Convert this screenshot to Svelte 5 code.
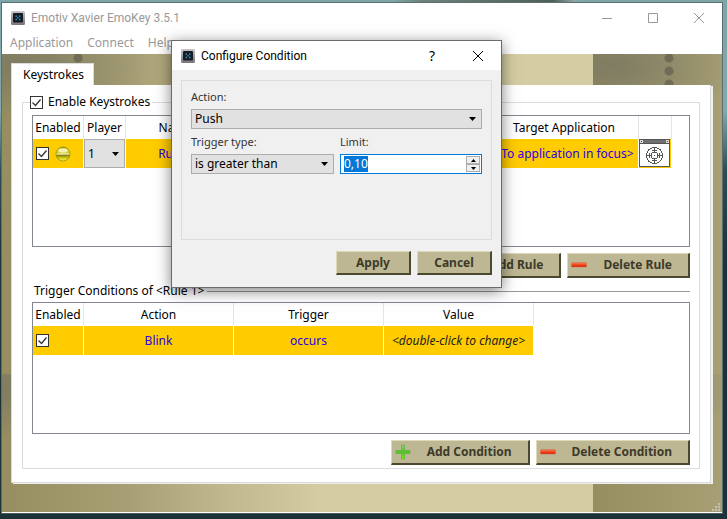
<script>
  import { onMount } from 'svelte';

  let enableKeystrokes = $state(true);
  let ruleEnabled = $state(true);
  let conditionEnabled = $state(true);
  let limit = $state('0,10');
  let limitInput;

  const menus = ['Application', 'Connect', 'Help'];

  onMount(() => {
    limitInput.focus();
    limitInput.select();
  });

  function step(delta) {
    const value = parseFloat(limit.replace(',', '.')) + delta;
    limit = Math.min(1, Math.max(0, value)).toFixed(2).replace('.', ',');
  }
</script>

{#snippet appIcon()}
  <svg class="app-icon" viewBox="0 0 14 14" aria-hidden="true">
    <defs>
      <linearGradient id="frame" x1="0" y1="0" x2="0" y2="1">
        <stop offset="0" stop-color="#c9c6cc" />
        <stop offset="1" stop-color="#77747a" />
      </linearGradient>
    </defs>
    <rect width="14" height="14" rx="1.5" fill="url(#frame)" />
    <rect x="2" y="2" width="10" height="9.500" rx="1" fill="#171b22" />
    <g fill="#2ca5dc">
      <rect x="4.500" y="4.500" width="1.400" height="1.400" />
      <rect x="8" y="4.500" width="1.400" height="1.400" />
      <rect x="6.200" y="6.100" width="1.400" height="1.400" />
      <rect x="4.500" y="7.800" width="1.400" height="1.400" />
      <rect x="8" y="7.800" width="1.400" height="1.400" />
    </g>
  </svg>
{/snippet}

{#snippet plus()}
  <svg class="btn-icon" viewBox="0 0 16 16" aria-hidden="true">
    <defs>
      <linearGradient id="green" x1="0" y1="0" x2="0" y2="1">
        <stop offset="0" stop-color="#8fd070" />
        <stop offset=".5" stop-color="#4fc32c" />
        <stop offset="1" stop-color="#7be60a" />
      </linearGradient>
    </defs>
    <path d="M6.500 1h3v5.500h5.500v3H9.500v5.500h-3V9.500H1V6.500h5.500z" fill="url(#green)" stroke="#5cab3c" stroke-width=".6" />
  </svg>
{/snippet}

{#snippet minus()}
  <svg class="btn-icon" viewBox="0 0 16 16" aria-hidden="true">
    <defs>
      <linearGradient id="red" x1="0" y1="0" x2="0" y2="1">
        <stop offset="0" stop-color="#f08560" />
        <stop offset=".5" stop-color="#ee4a1c" />
        <stop offset="1" stop-color="#d81a05" />
      </linearGradient>
    </defs>
    <rect x=".5" y="5.500" width="15" height="4.500" rx=".6" fill="url(#red)" stroke="#d9694b" stroke-width=".5" />
  </svg>
{/snippet}

<div class="desktop">
  <main class="window">
    <header class="titlebar">
      {@render appIcon()}
      <h1>Emotiv Xavier EmoKey 3.5.1</h1>
      <div class="controls">
        <button aria-label="Minimize"><svg viewBox="0 0 10 10"><path d="M0 5.500h10" /></svg></button>
        <button aria-label="Maximize"><svg viewBox="0 0 10 10"><path d="M.5.5h9v9h-9z" /></svg></button>
        <button aria-label="Close"><svg viewBox="0 0 10 10"><path d="M0 0l10 10M10 0L0 10" /></svg></button>
      </div>
    </header>
    <nav class="menubar">
      {#each menus as menu}
        <button>{menu}</button>
      {/each}
    </nav>

    <div class="body">
      <div class="tabs" role="tablist">
        <button class="tab" role="tab" aria-selected="true">Keystrokes</button>
      </div>
      <div class="pane" role="tabpanel">
        <fieldset class="group">
          <legend>
            <label><input class="check" type="checkbox" bind:checked={enableKeystrokes} />Enable Keystrokes</label>
          </legend>

          <div class="list">
            <table>
              <colgroup>
                <col class="c-enabled" /><col class="c-player" /><col class="c-name" /><col class="c-key" />
                <col class="c-target" /><col class="c-pick" />
              </colgroup>
              <thead>
                <tr><th>Enabled</th><th>Player</th><th>Name</th><th></th><th>Target Application</th><th></th></tr>
              </thead>
              <tbody>
                <tr>
                  <td class="flags">
                    <div>
                      <input class="check" type="checkbox" aria-label="Rule enabled" bind:checked={ruleEnabled} />
                      <svg class="led" viewBox="0 0 16 16" aria-hidden="true">
                        <defs>
                          <linearGradient id="ledBall" x1="0" y1="0" x2="0" y2="1">
                            <stop offset="0" stop-color="#8f8a10" />
                            <stop offset=".2" stop-color="#e6e05a" />
                            <stop offset=".46" stop-color="#c9c02c" />
                            <stop offset=".56" stop-color="#7d7600" />
                            <stop offset=".8" stop-color="#d8d020" />
                            <stop offset="1" stop-color="#f8f45a" />
                          </linearGradient>
                        </defs>
                        <circle cx="8" cy="8" r="7" fill="url(#ledBall)" stroke="#968a14" stroke-width=".8" />
                        <ellipse cx="8" cy="4.500" rx="4.500" ry="2.200" fill="#fffcd0" opacity=".7" />
                        <path d="M1.500 8h13" stroke="#fbf7c0" stroke-width="1.200" />
                      </svg>
                    </div>
                  </td>
                  <td class="player">
                    <div class="combo">
                      <select aria-label="Player"><option>1</option><option>2</option></select>
                      <svg viewBox="0 0 7 4" aria-hidden="true"><path d="M0 0h7L3.500 4z" /></svg>
                    </div>
                  </td>
                  <td>Rule 1</td>
                  <td></td>
                  <td>&lt;To application in focus&gt;</td>
                  <td class="pick">
                    <button aria-label="Pick target application">
                      <svg viewBox="0 0 31 28" shape-rendering="crispEdges" aria-hidden="true">
                        <rect width="31" height="28" fill="#555" />
                        <rect x="1" y="5" width="29" height="22" fill="#fff" />
                        <rect x="1" y="1" width="29" height="3" fill="#707070" />
                        <rect x="1" y="1" width="3" height="3" fill="#ddd" />
                        <rect x="27" y="1" width="3" height="3" fill="#ddd" />
                        <rect x="2" y="2" width="1" height="1" fill="#444" />
                        <rect x="28" y="2" width="1" height="1" fill="#444" />
                        <g fill="none" stroke="#555">
                          <circle cx="15.500" cy="16.500" r="8" />
                          <path d="M15.500 8v6M15.500 19v6M7 16.500h6M18 16.500h6" />
                          <path d="M13 11.500h5M13 13.500h5M13 19.500h5M13 21.500h5M10.500 14v5M12.500 14v5M18.500 14v5M20.500 14v5" />
                        </g>
                        <rect x="15" y="16" width="1" height="1" fill="#555" />
                      </svg>
                    </button>
                  </td>
                </tr>
              </tbody>
            </table>
          </div>
          <div class="actions">
            <button class="btn">{@render plus()}<span>Add Rule</span></button>
            <button class="btn">{@render minus()}<span>Delete Rule</span></button>
          </div>

          <h2>Trigger Conditions of &lt;Rule 1&gt;</h2>
          <div class="list">
            <table>
              <colgroup>
                <col class="c-enabled" /><col class="c-wide" /><col class="c-wide" /><col class="c-wide" />
              </colgroup>
              <thead>
                <tr><th>Enabled</th><th>Action</th><th>Trigger</th><th>Value</th></tr>
              </thead>
              <tbody>
                <tr>
                  <td class="flags">
                    <div>
                      <input class="check" type="checkbox" aria-label="Condition enabled" bind:checked={conditionEnabled} />
                    </div>
                  </td>
                  <td>Blink</td>
                  <td>occurs</td>
                  <td class="hint">&lt;double-click to change&gt;</td>
                </tr>
              </tbody>
            </table>
          </div>
          <div class="actions">
            <button class="btn">{@render plus()}<span>Add Condition</span></button>
            <button class="btn">{@render minus()}<span>Delete Condition</span></button>
          </div>
        </fieldset>
      </div>
      <svg class="grip" viewBox="0 0 8 8" aria-hidden="true">
        <path d="M6 0h2v2H6zM3 3h2v2H3zM6 3h2v2H6zM0 6h2v2H0zM3 6h2v2H3zM6 6h2v2H6z" fill="#c3c0b4" />
      </svg>
    </div>
  </main>

  <div class="dialog" role="dialog" aria-labelledby="dialog-title">
    <header class="titlebar">
      {@render appIcon()}
      <h1 id="dialog-title">Configure Condition</h1>
      <div class="controls">
        <button aria-label="Help" class="help">?</button>
        <button aria-label="Close"><svg viewBox="0 0 10 10"><path d="M0 0l10 10M10 0L0 10" /></svg></button>
      </div>
    </header>
    <div class="form">
      <div class="fields">
        <div class="field full">
          <label for="action">Action:</label>
          <div class="combo">
            <select id="action"><option>Push</option><option>Pull</option><option>Lift</option></select>
            <svg viewBox="0 0 7 4" aria-hidden="true"><path d="M0 0h7L3.500 4z" /></svg>
          </div>
        </div>
        <div class="field">
          <label for="trigger">Trigger type:</label>
          <div class="combo">
            <select id="trigger"><option>is greater than</option><option>is less than</option></select>
            <svg viewBox="0 0 7 4" aria-hidden="true"><path d="M0 0h7L3.500 4z" /></svg>
          </div>
        </div>
        <div class="field">
          <label for="limit">Limit:</label>
          <div class="spin">
            <input id="limit" type="text" bind:value={limit} bind:this={limitInput} />
            <div class="steps">
              <button aria-label="Increase" onclick={() => step(0.1)}><svg viewBox="0 0 5 3"><path d="M0 3h5L2.500 0z" /></svg></button>
              <button aria-label="Decrease" onclick={() => step(-0.1)}><svg viewBox="0 0 5 3"><path d="M0 0h5L2.500 3z" /></svg></button>
            </div>
          </div>
        </div>
      </div>
      <div class="actions">
        <button class="btn plain">Apply</button>
        <button class="btn plain">Cancel</button>
      </div>
    </div>
  </div>
</div>

<style>
  .desktop,
  .desktop * {
    box-sizing: border-box;
  }
  .desktop {
    position: relative;
    min-height: 100vh;
    padding: 2px 4px 5px 1px;
    background:
      linear-gradient(90deg, transparent 54%, #6f817b 58%, #4f5f58 76%, #8fa7a3 79%, transparent 80%) 0 0 / 100% 2px no-repeat,
      linear-gradient(#7da6a9 0, #82a9ab 110px, #2c4f57 170px, #1c333a 260px, #1b3239);
    color: #000;
    font: 12px/16px 'Noto Sans', sans-serif;
    overflow: hidden;
  }
  button,
  input,
  select {
    margin: 0;
    padding: 0;
    border: 0;
    background: none;
    color: inherit;
    font: inherit;
  }
  h1,
  h2 {
    margin: 0;
    font-size: 12px;
    font-weight: 400;
  }
  svg {
    display: block;
  }

  .window {
    display: flex;
    flex-direction: column;
    min-height: calc(100vh - 7px);
    border: 1px solid #5c7074;
    border-bottom-color: #4b5a5a;
    background: #fff;
  }
  .titlebar {
    display: flex;
    align-items: center;
    height: 29px;
    padding-left: 9px;
    gap: 6px;
    background: #fff;
    color: #999;
  }
  .app-icon {
    width: 14px;
    height: 14px;
  }
  .titlebar h1 {
    flex: 1;
    font-family: Roboto, sans-serif;
  }
  .controls {
    display: flex;
  }
  .controls button {
    display: flex;
    align-items: center;
    justify-content: center;
    width: 46px;
    height: 29px;
  }
  .controls svg {
    width: 10px;
    height: 10px;
    fill: none;
    stroke: currentColor;
  }
  .menubar {
    display: flex;
    gap: 14px;
    height: 22px;
    padding: 2px 8px;
    color: #999;
  }

  .body {
    position: relative;
    flex: 1;
    margin-bottom: 1px;
    padding: 9px 11px 26px 9px;
    background:
      radial-gradient(circle at 76px 4px, rgba(90, 88, 75, 0.6) 4px, transparent 5px) 0 0 / 591px 320px,
      radial-gradient(circle at 76px 17px, rgba(90, 88, 75, 0.6) 4px, transparent 5px) 0 0 / 591px 320px,
      radial-gradient(circle at 76px 30px, rgba(90, 88, 75, 0.6) 4px, transparent 5px) 0 0 / 591px 320px,
      radial-gradient(ellipse 130px 55px at 20px 12px, rgba(105, 108, 98, 0.55), transparent) 0 0 / 591px 320px,
      linear-gradient(90deg, #968d61 0, #a79e73 125px, #c2ba8e 230px, #d4cca2 320px, #d4cca2) 0 0 / 591px 320px;
  }
  .tabs {
    display: flex;
  }
  .tab {
    height: 22px;
    padding: 0 9px 0 11px;
    border: 1px solid #dcdcdc;
    border-bottom: 0;
    background: #fff;
  }
  .pane {
    padding: 9px 10px 13px 10px;
    border: 1px solid #d9d9d9;
    border-top: 0;
    background: #fff;
    box-shadow: 2px 1px #f0f0f0;
  }
  .group {
    min-width: 0;
    margin: 0;
    padding: 5px 9px 3px 9px;
    border: 1px solid #dcdcdc;
  }
  .group legend {
    margin-left: -2px;
    padding: 0 2px 0 0;
  }
  .group label {
    display: flex;
    align-items: center;
    gap: 5px;
  }
  .check {
    appearance: none;
    flex: none;
    width: 13px;
    height: 13px;
    border: 1px solid #333;
    background: #fff;
  }
  .check:checked {
    background: #fff url("data:image/svg+xml,%3Csvg xmlns='http://www.w3.org/2000/svg' viewBox='0 0 11 11'%3E%3Cpath d='M1.500 5.500l3 3 5-6' fill='none' stroke='%23333' stroke-width='1.300'/%3E%3C/svg%3E");
  }

  .list {
    height: 132px;
    border: 1px solid #828790;
    overflow: hidden;
  }
  table {
    border-collapse: separate;
    border-spacing: 0;
    table-layout: fixed;
    width: 0;
  }
  .c-enabled {
    width: 51px;
  }
  .c-player {
    width: 42px;
  }
  .c-name {
    width: 100px;
  }
  .c-key {
    width: 264px;
  }
  .c-target {
    width: 149px;
  }
  .c-pick {
    width: 33px;
  }
  .c-wide {
    width: 150px;
  }
  th {
    height: 23px;
    padding: 0;
    border-right: 1px solid #e5e5e5;
    font-weight: 400;
    white-space: nowrap;
  }
  td {
    height: 29px;
    padding: 0;
    border-right: 1px solid #fff;
    background: #fc0;
    color: #2a00e6;
    text-align: center;
    white-space: nowrap;
  }
  .flags div {
    display: flex;
    align-items: center;
    gap: 6px;
    padding-left: 3px;
  }
  .led {
    width: 16px;
    height: 16px;
  }
  td.player {
    background: #fff;
    color: #000;
  }
  td.hint {
    color: #222;
    font-style: italic;
  }
  .pick {
    vertical-align: top;
  }
  .pick button {
    display: block;
    width: 31px;
    height: 28px;
  }
  .pick svg {
    width: 31px;
    height: 28px;
  }

  .combo {
    position: relative;
  }
  .combo select {
    display: block;
    appearance: none;
    width: 100%;
    height: 20px;
    padding: 0 20px 0 3px;
    border: 1px solid #adadad;
    border-radius: 0;
    background: #e1e1e1;
  }
  .player .combo select {
    height: 29px;
  }
  .combo svg {
    position: absolute;
    top: 50%;
    right: 6px;
    width: 7px;
    height: 4px;
    margin-top: -2px;
    pointer-events: none;
  }

  .actions {
    display: flex;
    justify-content: flex-end;
    gap: 6px;
    margin-top: 6px;
  }
  .btn {
    display: flex;
    align-items: center;
    height: 25px;
    padding: 0 16px 0 3px;
    border: 1px solid;
    border-width: 1px 2px 2px 1px;
    border-color: #dedab8 #4b482f #4b482f #dedab8;
    background: #bdb793;
    color: #3d3a29;
    font: bold 12px/16px 'Noto Sans', sans-serif;
    gap: 16px;
  }
  .btn-icon {
    width: 16px;
    height: 16px;
  }
  .plain {
    justify-content: center;
    width: 75px;
    height: 24px;
    padding: 0;
  }
  h2 {
    display: flex;
    align-items: center;
    gap: 3px;
    margin: 5px 0 3px;
    padding-left: 2px;
  }
  h2::after {
    content: '';
    flex: 1;
    height: 1px;
    background: #999;
  }
  .grip {
    position: absolute;
    right: 2px;
    bottom: 1px;
    width: 8px;
    height: 8px;
  }

  .dialog {
    position: absolute;
    top: 40px;
    left: 171px;
    width: 331px;
    border: 1px solid #6b6b6b;
    background: #f0f0f0;
    box-shadow: 0 3px 14px rgba(0, 0, 0, 0.5);
  }
  .dialog .titlebar {
    color: #000;
  }
  .dialog .help {
    font-size: 14px;
  }
  .form {
    padding: 10px 9px 12px;
  }
  .fields {
    display: grid;
    grid-template-columns: 143px minmax(0, 1fr);
    align-content: start;
    gap: 5px 6px;
    height: 160px;
    padding: 8px 9px;
    border: 1px solid #dcdcdc;
  }
  .full {
    grid-column: 1 / -1;
  }
  .field label {
    display: block;
    height: 20px;
    color: #333;
    font-size: 11px;
  }
  .form .actions {
    margin-top: 11px;
  }
  .form .btn {
    padding: 0;
  }
  .spin {
    display: flex;
    height: 20px;
    padding: 1px;
    border: 1px solid #0078d7;
    background: #fff;
  }
  .spin input {
    flex: 1;
    min-width: 0;
    padding-left: 2px;
    outline: 0;
    caret-color: transparent;
  }
  .spin input::selection {
    background: #0078d7;
    color: #fff;
  }
  .steps {
    display: flex;
    flex-direction: column;
    width: 14px;
  }
  .steps button {
    display: flex;
    flex: 1;
    align-items: center;
    justify-content: center;
    border: 1px solid #adadad;
    background: #f0f0f0;
  }
  .steps svg {
    width: 5px;
    height: 3px;
  }
</style>
